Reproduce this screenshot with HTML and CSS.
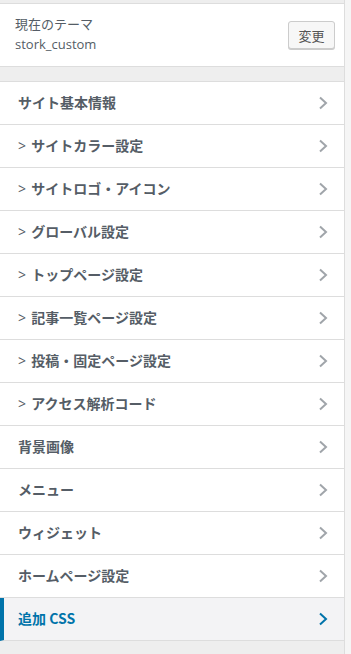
FILE: index.html
```html
<!DOCTYPE html>
<html lang="ja">
<head>
<meta charset="utf-8">
<link rel="stylesheet" href="styles.css">
</head>
<body>
<div class="wrap">
  <div class="panel">
    <div class="theme">
      <div class="theme-text">
        <div class="theme-label">現在のテーマ</div>
        <div class="theme-name">stork_custom</div>
      </div>
      <button class="btn">変更</button>
    </div>
    <ul class="menu">
      <li class="item"><span>サイト基本情報</span><svg class="chev" viewBox="0 0 10 14"><polyline points="2,1.5 8,7 2,12.5"/></svg></li>
      <li class="item"><span><i class="gt">&gt;</i> サイトカラー設定</span><svg class="chev" viewBox="0 0 10 14"><polyline points="2,1.5 8,7 2,12.5"/></svg></li>
      <li class="item"><span><i class="gt">&gt;</i> サイトロゴ・アイコン</span><svg class="chev" viewBox="0 0 10 14"><polyline points="2,1.5 8,7 2,12.5"/></svg></li>
      <li class="item"><span><i class="gt">&gt;</i> グローバル設定</span><svg class="chev" viewBox="0 0 10 14"><polyline points="2,1.5 8,7 2,12.5"/></svg></li>
      <li class="item"><span><i class="gt">&gt;</i> トップページ設定</span><svg class="chev" viewBox="0 0 10 14"><polyline points="2,1.5 8,7 2,12.5"/></svg></li>
      <li class="item"><span><i class="gt">&gt;</i> 記事一覧ページ設定</span><svg class="chev" viewBox="0 0 10 14"><polyline points="2,1.5 8,7 2,12.5"/></svg></li>
      <li class="item"><span><i class="gt">&gt;</i> 投稿・固定ページ設定</span><svg class="chev" viewBox="0 0 10 14"><polyline points="2,1.5 8,7 2,12.5"/></svg></li>
      <li class="item"><span><i class="gt">&gt;</i> アクセス解析コード</span><svg class="chev" viewBox="0 0 10 14"><polyline points="2,1.5 8,7 2,12.5"/></svg></li>
      <li class="item"><span>背景画像</span><svg class="chev" viewBox="0 0 10 14"><polyline points="2,1.5 8,7 2,12.5"/></svg></li>
      <li class="item"><span>メニュー</span><svg class="chev" viewBox="0 0 10 14"><polyline points="2,1.5 8,7 2,12.5"/></svg></li>
      <li class="item"><span>ウィジェット</span><svg class="chev" viewBox="0 0 10 14"><polyline points="2,1.5 8,7 2,12.5"/></svg></li>
      <li class="item"><span>ホームページ設定</span><svg class="chev" viewBox="0 0 10 14"><polyline points="2,1.5 8,7 2,12.5"/></svg></li>
      <li class="item active"><span>追加 CSS</span><svg class="chev" viewBox="0 0 10 14"><polyline points="2,1.5 8,7 2,12.5"/></svg></li>
    </ul>
  </div>
  <div class="side"></div>
</div>
</body>
</html>
```
FILE: styles.css
```css
html, body {
  margin: 0;
  padding: 0;
  height: 100%;
}
body {
  font-family: "Noto Sans CJK JP", "Open Sans", "Noto Sans", sans-serif;
  background: #eeeeee;
  color: #555d66;
}
.wrap {
  display: flex;
  min-height: 100%;
}
.panel {
  width: 344px;
  flex: none;
  background: #eeeeee;
  border-right: 1px solid #dddddd;
  padding-top: 3px;
}
.side {
  flex: 1;
  background: #f5f5f5;
}
.theme {
  background: #fff;
  border-top: 1px solid #dddddd;
  border-bottom: 1px solid #dddddd;
  height: 62px;
  display: flex;
  align-items: center;
  justify-content: space-between;
  padding: 0 9px 0 15px;
}
.theme-text {
  margin-top: -3px;
}
.theme-label {
  font-size: 13px;
  line-height: 21px;
  color: #555d66;
}
.theme-name {
  font-family: "Open Sans", "Noto Sans CJK JP", sans-serif;
  font-size: 13px;
  line-height: 21px;
  color: #555d66;
}
.btn {
  font-family: "Noto Sans CJK JP", sans-serif;
  font-size: 13px;
  color: #555;
  background: #f7f7f7;
  border: 1px solid #cccccc;
  border-radius: 3px;
  box-shadow: 0 1px 0 #cccccc;
  height: 28px;
  width: 47px;
  padding: 0;
}
.menu {
  list-style: none;
  margin: 14px 0 0;
  padding: 0;
  border-top: 1px solid #dddddd;
}
.item {
  height: 42px;
  border-bottom: 1px solid #dddddd;
  background: #fff;
  display: flex;
  align-items: center;
  justify-content: space-between;
  padding: 0 16px 0 18px;
  font-size: 14px;
  font-weight: 700;
  color: #555d66;
}
.item span {
  margin-top: -2px;
}
.gt {
  font-style: normal;
  font-weight: 400;
  font-family: "Open Sans", sans-serif;
  margin-right: 2px;
}
.chev {
  width: 10px;
  height: 14px;
  fill: none;
  stroke: #a0a5aa;
  stroke-width: 2;
}
.item.active {
  background: #f3f3f5;
  color: #0073aa;
  border-left: 4px solid #0073aa;
  padding-left: 14px;
}
.item.active .chev {
  stroke: #0073aa;
}
```
